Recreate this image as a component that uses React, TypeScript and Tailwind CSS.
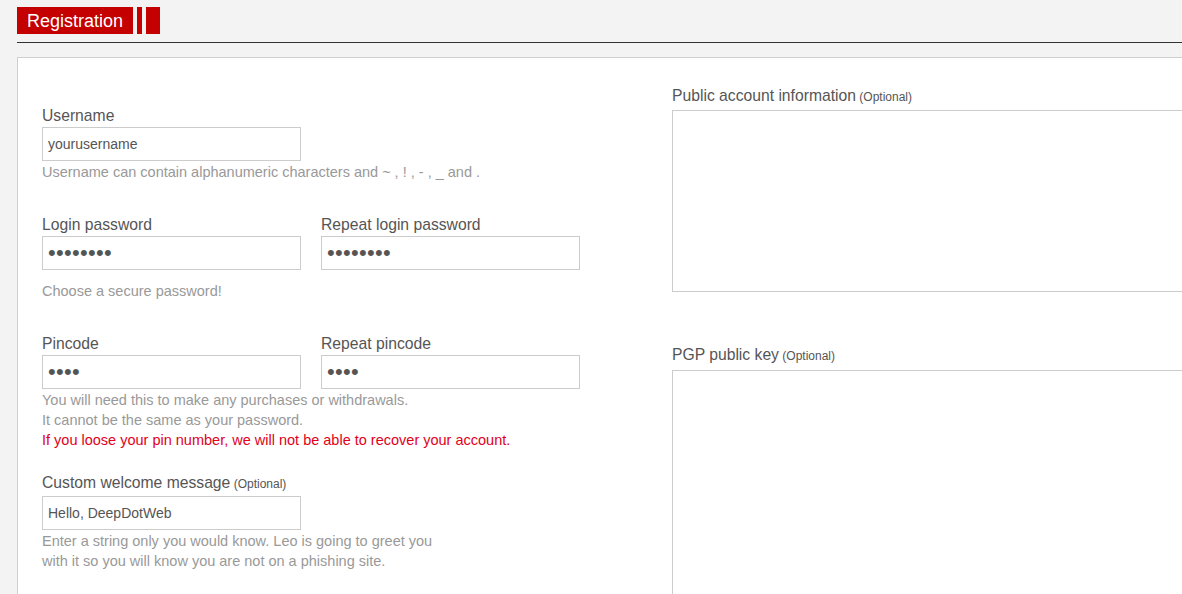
import React from "react";

const font = { fontFamily: '"Liberation Sans", Arial, sans-serif' };

function Label({ text, optional }: { text: string; optional?: boolean }) {
  return (
    <div className="text-[15.7px] leading-[20px] text-[#555]">
      {text}
      {optional && <span className="text-[12px] text-[#555]"> (Optional)</span>}
    </div>
  );
}

function TextInput({ value, type = "text" }: { value: string; type?: string }) {
  const isPw = type === "password";
  return (
    <input
      type={type}
      defaultValue={value}
      readOnly
      className={
        "box-border block w-[259px] h-[34px] border border-[#cccccc] bg-white px-[5px] text-[#555] outline-none " +
        (isPw ? "text-[22px] tracking-[0.3px]" : "text-[14px]")
      }
      style={font}
    />
  );
}

export default function App() {
  return (
    <div className="w-screen h-[594px] overflow-hidden bg-[#f3f3f3]" style={font}>
      <div className="w-[1400px] pl-[17px]">
        <div className="pt-[7px] flex gap-[4px]">
          <div className="h-[27px] w-[116px] bg-[#c40000] pl-[10px] text-white text-[18px] leading-[29px]">
            Registration
          </div>
          <div className="h-[27px] w-[5px] bg-[#c40000]" />
          <div className="h-[27px] w-[14px] bg-[#c40000]" />
        </div>
        <div className="mt-[8px] h-px bg-[#333]" />
        <div className="mt-[14px] border border-[#cfcfcf] bg-white flex h-[700px]">
          <div className="pl-[24px] pt-[48px] w-[630px] shrink-0">
            <Label text="Username" />
            <div className="mt-[1px]">
              <TextInput value="yourusername" />
            </div>
            <div className="text-[14.5px] leading-[20px] text-[#999] pt-[1px]">
              Username can contain alphanumeric characters and ~ , ! , - , _ and .
            </div>

            <div className="mt-[33px] flex gap-[20px]">
              <div>
                <Label text="Login password" />
                <div className="mt-[1px]">
                  <TextInput type="password" value="password" />
                </div>
              </div>
              <div>
                <Label text="Repeat login password" />
                <div className="mt-[1px]">
                  <TextInput type="password" value="password" />
                </div>
              </div>
            </div>
            <div className="mt-[11px] text-[14.5px] leading-[20px] text-[#999]">
              Choose a secure password!
            </div>

            <div className="mt-[33px] flex gap-[20px]">
              <div>
                <Label text="Pincode" />
                <div className="mt-[1px]">
                  <TextInput type="password" value="1234" />
                </div>
              </div>
              <div>
                <Label text="Repeat pincode" />
                <div className="mt-[1px]">
                  <TextInput type="password" value="1234" />
                </div>
              </div>
            </div>
            <div className="text-[14.5px] leading-[20px] text-[#999] pt-[1px]">
              <div>You will need this to make any purchases or withdrawals.</div>
              <div>It cannot be the same as your password.</div>
              <div className="text-[#e2001a]">
                If you loose your pin number, we will not be able to recover your account.
              </div>
            </div>

            <div className="mt-[23px]">
              <Label text="Custom welcome message" optional />
            </div>
            <div className="mt-[2px]">
              <TextInput value="Hello, DeepDotWeb" />
            </div>
            <div className="text-[14.5px] leading-[20px] text-[#999] pt-[1px]">
              <div>Enter a string only you would know. Leo is going to greet you</div>
              <div>with it so you will know you are not on a phishing site.</div>
            </div>
          </div>

          <div className="pt-[28px] pl-[24px] flex-1">
            <Label text="Public account information" optional />
            <textarea
              readOnly
              className="mt-[3px] block box-border w-[620px] h-[182px] border border-[#cccccc] bg-white resize-none outline-none"
            />
            <div className="mt-[53px]">
              <Label text="PGP public key" optional />
            </div>
            <textarea
              readOnly
              className="mt-[4px] block box-border w-[620px] h-[300px] border border-[#cccccc] bg-white resize-none outline-none"
            />
          </div>
        </div>
      </div>
    </div>
  );
}
